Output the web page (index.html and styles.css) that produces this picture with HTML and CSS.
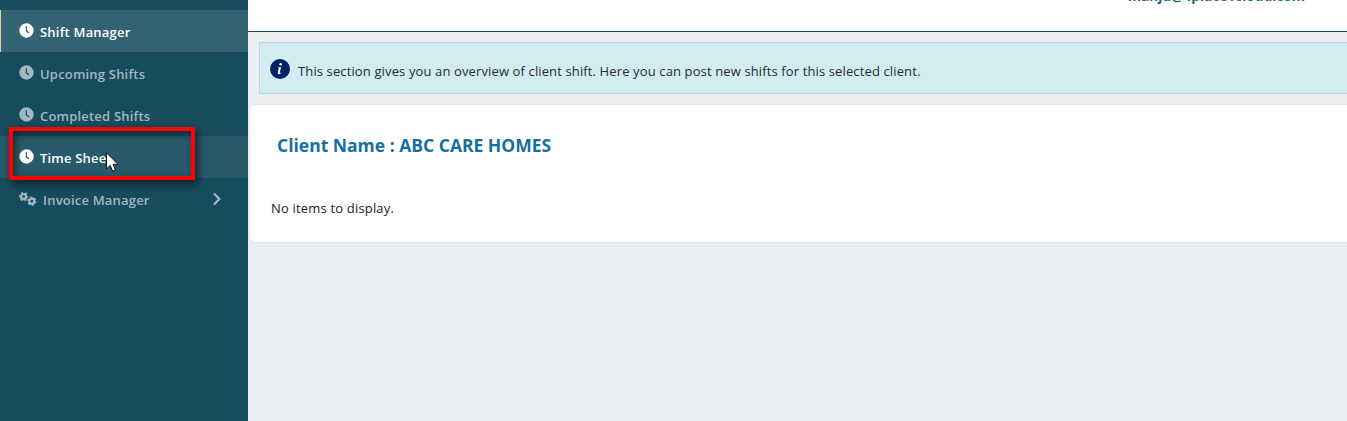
FILE: index.html
```html
<!DOCTYPE html>
<html lang="en">
<head>
<meta charset="utf-8">
<title>Shift Manager</title>
<link rel="stylesheet" href="styles.css">
</head>
<body>
<svg class="defs" width="0" height="0">
  <symbol id="clock" viewBox="0 0 16 16"><path fill="currentColor" fill-rule="evenodd" d="M8 .3a7.7 7.7 0 1 0 0 15.4a7.7 7.7 0 0 0 0-15.4zM7.2 3.5h1.3v4.5l2.6 2-.8 1.1L7.2 8.7z"/></symbol>
</svg>
<div class="app">
  <nav class="sidebar">
    <a class="item active"><svg class="icon"><use href="#clock"/></svg><span class="label">Shift Manager</span></a>
    <a class="item"><svg class="icon"><use href="#clock"/></svg><span class="label">Upcoming Shifts</span></a>
    <a class="item"><svg class="icon"><use href="#clock"/></svg><span class="label">Completed Shifts</span></a>
    <a class="item hover"><svg class="icon"><use href="#clock"/></svg><span class="label">Time Shee</span></a>
    <a class="item">
      <svg class="gears" viewBox="0 0 18 16">
        <g fill="none" stroke="currentColor">
          <circle cx="4.6" cy="5.6" r="2.5" stroke-width="2.3"/>
          <circle cx="4.6" cy="5.6" r="4" stroke-width="1.4" stroke-dasharray="2.1 2.089" stroke-dashoffset="1.05"/>
          <circle cx="12.8" cy="10.2" r="2.5" stroke-width="2.3"/>
          <circle cx="12.8" cy="10.2" r="4" stroke-width="1.4" stroke-dasharray="2.1 2.089"/>
        </g>
      </svg>
      <span class="label">Invoice Manager</span>
      <svg class="chevron" viewBox="0 0 10 14"><path d="M2 1.5L7.3 7L2 12.5" fill="none" stroke="currentColor" stroke-width="2.2"/></svg>
    </a>
  </nav>
  <main class="main">
    <header class="topbar"><span class="email">manju@4place1cloud.com</span></header>
    <div class="notice">
      <svg class="info" viewBox="0 0 20 20"><circle cx="10" cy="10" r="10" fill="#012169"/><circle cx="10.7" cy="5.2" r="1.3" fill="#fff"/><path d="M8 8.4l3.1-.4-1.3 5.8q0 .6 1.3-.3l.2.5q-1.5 1.4-2.8 1.3-1-.2-.7-1.5l1-4.6-.9-.2z" fill="#fff"/></svg>
      <span class="notice-text">This section gives you an overview of client shift. Here you can post new shifts for this selected client.</span>
    </div>
    <section class="card">
      <h1 class="client">Client Name : ABC CARE HOMES</h1>
      <p class="empty">No items to display.</p>
    </section>
  </main>
</div>
<div class="highlight"></div>
<svg class="cursor" viewBox="0 0 13 20"><path d="M.5.7v16.2l3.7-3.5 2.5 5.9 2.8-1.2L7 12.4h5z" fill="#fff" stroke="#111" stroke-width="1"/></svg>
</body>
</html>
```
FILE: styles.css
```css
* { box-sizing: border-box; }
body { margin: 0; background: #ebeef3; font-family: "Open Sans", "Noto Sans", sans-serif; overflow: hidden; }
.defs { position: absolute; }
.app { display: flex; width: 1347px; height: 421px; overflow: hidden; }
.sidebar { width: 248px; flex: none; padding-top: 10px; background: #174c5f; }
.item { display: flex; align-items: center; height: 42px; padding-left: 19px; color: #a2b7bf; font-size: 13px; font-weight: 600; letter-spacing: .2px; line-height: 20px; white-space: nowrap; }
.item.active { background: #336272; border-left: 1px solid #e6d28b; padding-left: 18px; color: #fff; }
.item.hover { background: #285a6b; color: #fff; }
.icon { width: 15px; height: 15px; margin: 0 6px 1px 0; }
.label { padding-top: 2px; }
.gears { width: 18px; height: 16px; margin-right: 6px; }
.chevron { width: 10px; height: 14px; margin: 0 26px 1px auto; }
.main { flex: 1; min-width: 0; }
.topbar { display: flex; justify-content: flex-end; height: 32px; background: #fff; border-bottom: 1px solid #174c66; }
.email { margin: -14px 42px 0 0; color: #176788; font-size: 13.5px; font-weight: 700; letter-spacing: .07px; line-height: 20px; }
.notice { display: flex; align-items: center; height: 52px; margin: 10px 0 0 11px; padding-left: 10px; background: #d2ecf1; border: 1px solid #b9d3da; border-right: 0; }
.info { width: 20px; height: 20px; margin: 2px 8px 0 0; }
.notice-text { padding-top: 5px; color: #222d32; font-size: 13px; letter-spacing: .125px; line-height: 20px; white-space: nowrap; }
.card { height: 139px; margin: 10px 0 0 1px; padding: 26px 0 0 22px; background: #fff; border: 1px solid #e2e5e9; border-right: 0; border-radius: 6px 0 0 6px; }
.client { margin: 0 0 0 5px; color: #176f9f; font-size: 17.5px; font-weight: 700; letter-spacing: 0; line-height: 28px; }
.empty { margin: 39px 0 0 -1px; color: #222; font-size: 13px; letter-spacing: .18px; line-height: 20px; }
.highlight { position: absolute; left: 9px; top: 127px; width: 186px; height: 53px; border: 4px solid #f00; box-shadow: 3px 4px 9px rgba(0,0,0,.6), inset 3px 4px 9px rgba(0,0,0,.45); }
.cursor { position: absolute; left: 106px; top: 152px; width: 13px; height: 20px; }
```
